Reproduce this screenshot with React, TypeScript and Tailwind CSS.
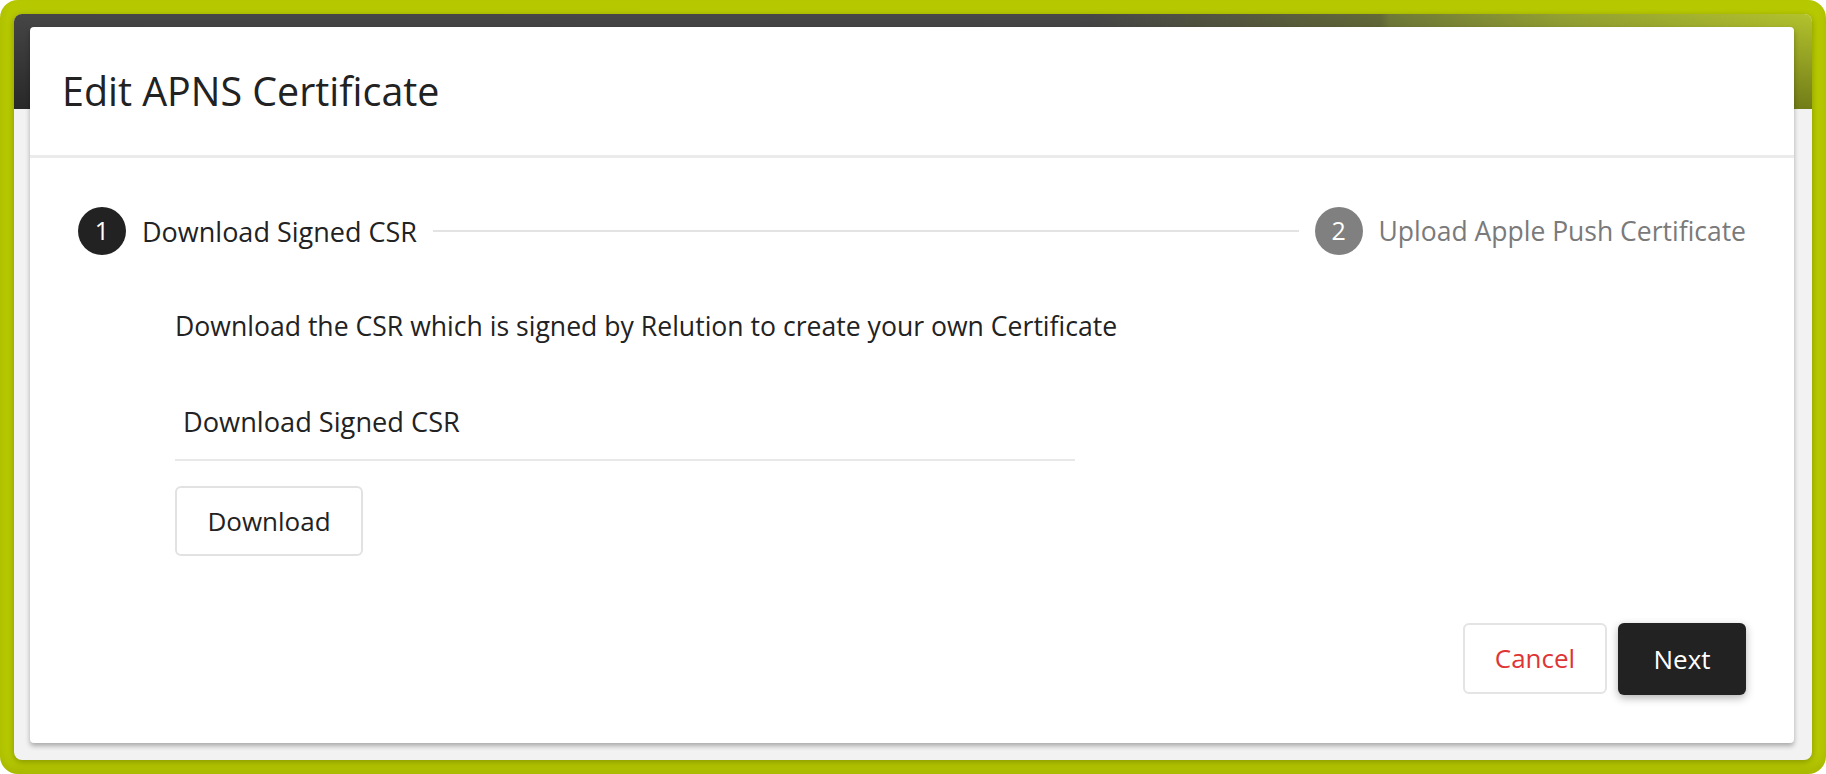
// Edit APNS Certificate — first step of the two-step wizard, shown as a
// modal laid over the app shell (dark header band, light grey page).
const FONT = "font-['Open_Sans','Noto_Sans',sans-serif]";

function StepBadge({ n, active }: { n: number; active: boolean }) {
  return (
    <div
      className={
        active
          ? "flex h-[48px] w-[48px] shrink-0 items-center justify-center rounded-full bg-[#222222] text-[25px] text-white"
          : "flex h-[48px] w-[48px] shrink-0 items-center justify-center rounded-full bg-[#808080] text-[25px] text-white"
      }
    >
      {n}
    </div>
  );
}

export default function App() {
  return (
    <div className={`h-[774px] w-[1826px] bg-white ${FONT}`}>
      <div className="h-full w-full rounded-[18px] bg-[#b6c800] p-[14px] shadow-[inset_0_-6px_8px_rgba(0,0,0,0.08)]">
        <div className="relative h-full w-full overflow-hidden rounded-[8px] bg-[#f2f2f2] shadow-[0_2px_6px_rgba(0,0,0,0.25)]">
          {/* app header band behind the modal */}
          <div className="h-[95px] w-full bg-[linear-gradient(180deg,rgba(255,255,255,0.04)_0%,rgba(0,0,0,0.35)_100%),linear-gradient(90deg,#3e3e3e_0%,#404040_60%,#5d632f_76%,#6a7430_76.5%,#8f9d2a_86%,#b0c024_100%)]" />

          {/* modal */}
          <div className="absolute left-[16px] top-[13px] flex h-[716px] w-[1764px] flex-col rounded-[4px] bg-white text-[#222222] shadow-[0_3px_5px_rgba(0,0,0,0.3)]">
            <div className="flex h-[131px] shrink-0 items-center border-b-[3px] border-[#ebebeb] pl-[32px] pt-[2px]">
              <h1 className="text-[39.4px] font-normal leading-none">Edit APNS Certificate</h1>
            </div>

            <div className="flex flex-1 flex-col px-[48px] pt-[49px]">
              <div className="flex h-[48px] items-center">
                <StepBadge n={1} active />
                <span className="ml-[16px] text-[27px] leading-none">Download Signed CSR</span>
                <div className="mx-[16px] h-[2px] flex-1 bg-[#e3e3e3]" />
                <StepBadge n={2} active={false} />
                <span className="ml-[16px] text-[26.5px] leading-none text-[#7a7a7a]">
                  Upload Apple Push Certificate
                </span>
              </div>

              <div className="ml-[97px] mt-[53px] flex flex-col items-start">
                <p className="text-[26.6px] leading-[36px]">
                  Download the CSR which is signed by Relution to create your own Certificate
                </p>
                <div className="mt-[60px] w-[900px] border-b-2 border-[#e8e8e8] pb-[19px] pl-[8px]">
                  <span className="block text-[27.2px] leading-[36px]">Download Signed CSR</span>
                </div>
                <button
                  type="button"
                  className="mt-[25px] h-[70px] w-[188px] rounded-[6px] border-2 border-[#e2e2e2] bg-white text-[26px] text-[#222222]"
                >
                  Download
                </button>
              </div>

              <div className="mt-auto flex justify-end gap-[11px] pb-[48px]">
                <button
                  type="button"
                  className="h-[71px] w-[144px] rounded-[6px] border-2 border-[#e4e4e4] bg-white text-[26px] text-[#de3535]"
                >
                  Cancel
                </button>
                <button
                  type="button"
                  className="h-[72px] w-[128px] rounded-[6px] bg-[#222222] text-[26px] text-white shadow-[0_3px_8px_rgba(0,0,0,0.3)]"
                >
                  Next
                </button>
              </div>
            </div>
          </div>
        </div>
      </div>
    </div>
  );
}
